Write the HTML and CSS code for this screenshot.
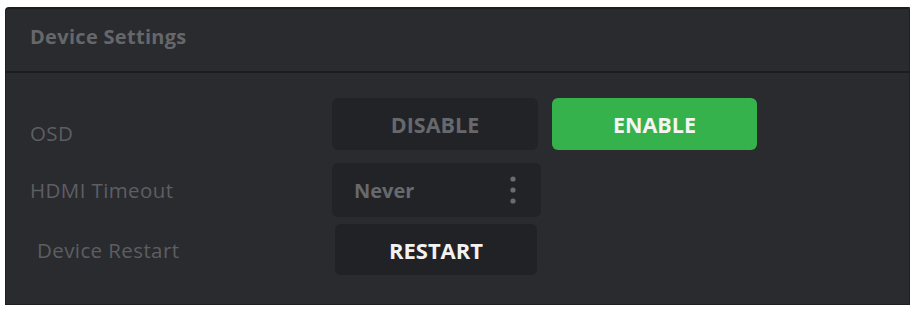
FILE: index.html
```html
<!DOCTYPE html>
<html>
<head>
  <meta charset="UTF-8">
  <title>Device Settings</title>
  <link rel="stylesheet" href="styles.css">
</head>
<body>
  <div class="panel">
    <div class="panel-header">Device Settings</div>
    <div class="panel-body">
      <div class="row row-osd">
        <span class="label">OSD</span>
        <div class="controls">
          <button class="btn btn-off">DISABLE</button>
          <button class="btn btn-on">ENABLE</button>
        </div>
      </div>
      <div class="row row-timeout">
        <span class="label">HDMI Timeout</span>
        <div class="select">
          <span>Never</span>
          <svg class="dots" width="6" height="28" viewBox="0 0 6 28">
            <circle cx="3" cy="3" r="2.6" fill="#6b6c70"/>
            <circle cx="3" cy="14" r="2.6" fill="#6b6c70"/>
            <circle cx="3" cy="25" r="2.6" fill="#6b6c70"/>
          </svg>
        </div>
      </div>
      <div class="row row-restart">
        <span class="label">Device Restart</span>
        <button class="btn btn-restart">RESTART</button>
      </div>
    </div>
  </div>
</body>
</html>
```

FILE: styles.css
```css
body {
  margin: 0;
  background-color: #fff;
  font-family: "Open Sans", Lato, sans-serif;
}

.panel {
  margin: 7px 3px 0 5px;
  height: 298px;
  box-sizing: border-box;
  background-color: #2a2b2f;
  border: 1px solid #1e1f21;
  border-top: 2px solid #1c1d1f;
  border-radius: 4px 0 0 0;
}

.panel-header {
  height: 64px;
  box-sizing: border-box;
  padding: 14px 0 0 24px;
  font-size: 20px;
  font-weight: 700;
  letter-spacing: 0.3px;
  color: #66676b;
  border-bottom: 2px solid #1b1c1e;
}

.panel-body {
  padding: 25px 0 0 24px;
}

.row {
  display: flex;
  align-items: center;
}

.label {
  width: 302px;
  font-size: 20.5px;
  letter-spacing: 0.4px;
  color: #5d5e62;
}

.row-osd .label {
  margin-top: 17px;
}

.controls {
  display: flex;
  gap: 14px;
}

.btn {
  height: 52px;
  border: none;
  border-radius: 6px;
  font-family: "Open Sans", Lato, sans-serif;
  font-size: 21.5px;
  font-weight: 700;
  padding: 0;
  cursor: pointer;
}

.btn-off {
  width: 206px;
  background-color: #222326;
  color: #67686c;
}

.btn-on {
  width: 205px;
  background-color: #35b24b;
  color: #f4f4f4;
}

.row-timeout {
  margin-top: 13px;
}

.select {
  width: 209px;
  height: 54px;
  box-sizing: border-box;
  padding: 0 25px 0 22px;
  border-radius: 6px;
  background-color: #222326;
  display: flex;
  align-items: center;
  justify-content: space-between;
  font-size: 20px;
  font-weight: 700;
  color: #68696d;
}

.row-restart {
  margin-top: 7px;
}

.row-restart .label {
  padding-left: 7px;
  width: 298px;
}

.btn-restart {
  width: 202px;
  height: 51px;
  font-size: 22px;
  background-color: #212225;
  color: #f2f2f2;
}
```
